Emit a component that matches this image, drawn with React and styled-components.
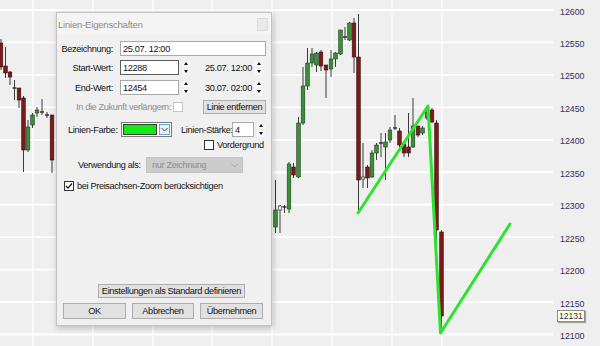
import React from 'react';
import styled, { createGlobalStyle } from 'styled-components';

const Global = createGlobalStyle`
  html, body { margin: 0; padding: 0; background: #efefef; }
  body { font-family: "Liberation Sans", Arial, sans-serif; }
`;

const Page = styled.div`
  position: relative;
  width: 600px;
  height: 346px;
  overflow: hidden;
  background: #efefef;
`;

const ChartSvg = styled.svg`
  display: block;
`;

const PriceBadge = styled.div`
  position: absolute;
  left: 557px;
  top: 310px;
  height: 10px;
  padding: 0 1px;
  background: #ffffe1;
  border: 1px solid #8c8c8c;
  box-shadow: 1px 1px 1px rgba(0, 0, 0, 0.3);
  font-family: "Liberation Sans", Arial, sans-serif;
  font-size: 8.5px;
  line-height: 10px;
  color: #2f2f5f;
`;

const Dialog = styled.div`
  position: absolute;
  left: 56px;
  top: 12px;
  width: 216px;
  height: 314px;
  box-sizing: border-box;
  background: #f0f0f0;
  border: 1px solid #c2c2c2;
  box-shadow: 1px 2px 6px rgba(0, 0, 0, 0.22);
  display: flex;
  flex-direction: column;
  font-family: "Liberation Sans", Arial, sans-serif;
  font-size: 9.2px;
  letter-spacing: -0.35px;
  color: #111;
`;

const TitleBar = styled.div`
  height: 22px;
  display: flex;
  align-items: center;
  justify-content: space-between;
  padding: 0 3px 0 1px;
  background: #f4f4f4;
  color: #8a8a8a;
  font-size: 9.5px;
  letter-spacing: -0.2px;
`;

const CloseBox = styled.div`
  width: 11px;
  height: 13px;
  box-sizing: border-box;
  background: #e9e9e9;
  border: 1px solid #dadada;
`;

const Row = styled.div`
  display: flex;
  align-items: center;
  height: ${(p) => p.$h}px;
  margin-top: ${(p) => p.$mt || 0}px;
  padding-left: ${(p) => p.$pl || 0}px;
  padding-right: ${(p) => p.$pr || 0}px;
  flex-shrink: 0;
`;

const Spacer = styled.div`
  flex: 1;
`;

const Label = styled.span`
  width: ${(p) => (p.$w ? `${p.$w}px` : 'auto')};
  margin-left: ${(p) => p.$ml || 0}px;
  text-align: ${(p) => (p.$right ? 'right' : 'left')};
  color: ${(p) => (p.$disabled ? '#8c8c8c' : '#111')};
  white-space: nowrap;
  flex-shrink: 0;
`;

const TextBox = styled.div`
  width: ${(p) => p.$w}px;
  height: 100%;
  margin-left: ${(p) => p.$ml || 0}px;
  box-sizing: border-box;
  background: #fff;
  border: 1px solid ${(p) => (p.$focus ? '#5c5c5c' : '#a9a9a9')};
  padding-left: 2px;
  display: flex;
  align-items: center;
  flex-shrink: 0;
`;

const SpinBox = styled.div`
  width: 8px;
  height: 14px;
  margin-left: ${(p) => p.$ml || 0}px;
  display: flex;
  flex-direction: column;
  justify-content: space-between;
  flex-shrink: 0;
`;

const SpinHalf = styled.div`
  height: 6px;
  background: #f7f7f7;
  display: flex;
  align-items: center;
  justify-content: center;
`;

const TriUp = styled.span`
  width: 0;
  height: 0;
  border-left: 2.5px solid transparent;
  border-right: 2.5px solid transparent;
  border-bottom: 3px solid #111;
`;

const TriDown = styled.span`
  width: 0;
  height: 0;
  border-left: 2.5px solid transparent;
  border-right: 2.5px solid transparent;
  border-top: 3px solid #111;
`;

const Button = styled.div`
  width: ${(p) => p.$w}px;
  height: 100%;
  margin-left: ${(p) => (p.$auto ? 'auto' : `${p.$ml || 0}px`)};
  box-sizing: border-box;
  background: #e1e1e1;
  border: 1px solid #adadad;
  display: flex;
  align-items: center;
  justify-content: center;
  white-space: nowrap;
  flex-shrink: 0;
`;

const Check = styled.div`
  width: 10px;
  height: 10px;
  margin-left: ${(p) => p.$ml || 0}px;
  box-sizing: border-box;
  background: #fff;
  border: 1px solid ${(p) => (p.$disabled ? '#c6c6c6' : '#333')};
  display: flex;
  align-items: center;
  justify-content: center;
  flex-shrink: 0;
`;

const ColorCombo = styled.div`
  width: ${(p) => p.$w}px;
  height: 100%;
  margin-left: ${(p) => p.$ml || 0}px;
  box-sizing: border-box;
  border: 1px solid #7a7a7a;
  background: #fff;
  display: flex;
  align-items: stretch;
  padding: 1px;
  gap: 2px;
  flex-shrink: 0;
`;

const Swatch = styled.div`
  flex: 1;
  background: #12ec12;
  border: 1px solid #3a3a3a;
`;

const DropBtn = styled.div`
  width: 11px;
  box-sizing: border-box;
  border: 1px solid #6aa6dc;
  background: #eaf3fb;
  display: flex;
  align-items: center;
  justify-content: center;
`;

const Select = styled.div`
  width: ${(p) => p.$w}px;
  height: 100%;
  margin-left: ${(p) => p.$ml || 0}px;
  box-sizing: border-box;
  background: #cccccc;
  border: 1px solid #c2c2c2;
  color: #8d8d8d;
  display: flex;
  align-items: center;
  justify-content: space-between;
  padding: 0 4px 0 5px;
  flex-shrink: 0;
`;

const Chevron = ({ color = '#555' }) => (
  <svg width="7" height="5" viewBox="0 0 7 5">
    <polyline points="0.5,1 3.5,4 6.5,1" fill="none" stroke={color} strokeWidth="1" />
  </svg>
);

const Spinner = ({ ml }) => (
  <SpinBox $ml={ml}>
    <SpinHalf>
      <TriUp />
    </SpinHalf>
    <SpinHalf>
      <TriDown />
    </SpinHalf>
  </SpinBox>
);

// [x, high, low, bodyTop, bodyBottom, type]
const candles = [
  [1, 39, 70, 43, 67, 'r'],
  [5.5, 47, 78, 66, 73, 'r'],
  [10, 71, 85, 72, 77, 'r'],
  [14.5, 80, 100, 88, 88, 'd'],
  [19, 88, 108, 88, 100, 'r'],
  [23.5, 96, 172, 98, 150, 'r'],
  [28, 120, 152, 127, 150, 'g'],
  [32.5, 113, 128, 115, 125, 'g'],
  [37, 107, 117, 110, 113, 'g'],
  [42, 99, 115, 112, 112, 'd'],
  [47, 112, 118, 115, 115, 'd'],
  [52, 115, 173, 115, 160, 'r'],
  [275.5, 180, 233, 210, 227, 'g'],
  [280, 205, 233, 206, 210, 'h'],
  [284.5, 205, 213, 207, 207, 'd'],
  [289, 162, 213, 164, 209, 'g'],
  [293.5, 163, 178, 167, 175, 'r'],
  [298.5, 117, 178, 123, 177, 'g'],
  [303, 67, 125, 86, 123, 'g'],
  [307.5, 48, 90, 63, 86, 'g'],
  [312, 48, 67, 54, 63, 'g'],
  [316.5, 52, 72, 53, 65, 'g'],
  [321, 50, 71, 52, 66, 'r'],
  [326, 65, 98, 65, 70, 'r'],
  [331, 50, 77, 59, 69, 'g'],
  [335.5, 52, 67, 53, 59, 'g'],
  [340.5, 30, 55, 30, 54, 'g'],
  [345, 27, 40, 37, 37, 'd'],
  [349.5, 22, 41, 23, 40, 'g'],
  [354, 18, 73, 23, 57, 'r'],
  [358.5, 14, 213, 57, 180, 'r'],
  [363, 143, 188, 177, 179, 'h'],
  [367.5, 165, 188, 167, 178, 'r'],
  [372, 150, 178, 153, 177, 'g'],
  [376.5, 143, 160, 145, 153, 'g'],
  [381, 133, 157, 143, 143, 'd'],
  [385.5, 133, 180, 142, 147, 'g'],
  [390, 127, 143, 130, 140, 'g'],
  [395, 115, 130, 128, 128, 'd'],
  [399.5, 128, 147, 131, 145, 'r'],
  [404, 143, 157, 144, 153, 'r'],
  [408.5, 113, 157, 147, 153, 'r'],
  [413, 98, 148, 126, 147, 'g'],
  [418, 126, 137, 126, 135, 'r'],
  [422.5, 126, 135, 128, 133, 'g'],
  [427, 107, 120, 112, 118, 'g'],
  [432, 108, 123, 110, 122, 'r'],
  [436.5, 120, 247, 123, 230, 'r'],
  [441.5, 230, 330, 232, 316, 'r'],
];

const priceLabels = [12600, 12550, 12500, 12450, 12400, 12350, 12300, 12250, 12200, 12150, 12100];
const vLines = [33, 93, 153, 212, 272, 332, 392, 442];

const Candle = ({ c }) => {
  const [x, hi, lo, top, bot, t] = c;
  const fill = t === 'g' ? '#3b8f3b' : t === 'r' ? '#7a1b1b' : '#f4f4f4';
  const stroke = t === 'g' ? '#1d3d1d' : t === 'r' ? '#3d0c0c' : '#222';
  return (
    <g>
      <line x1={x} x2={x} y1={hi} y2={lo} stroke="#3a3a3a" strokeWidth="1" />
      {t === 'd' ? (
        <line x1={x - 2} x2={x + 2} y1={top} y2={top} stroke="#111" strokeWidth="1.2" />
      ) : (
        <rect x={x - 1.8} y={top} width="3.6" height={Math.max(bot - top, 1.5)} fill={fill} stroke={stroke} strokeWidth="0.6" />
      )}
    </g>
  );
};

const Chart = () => (
  <ChartSvg width="600" height="346" viewBox="0 0 600 346">
    <rect x="0" y="0" width="600" height="346" fill="#efefef" />
    {priceLabels.map((p, i) => (
      <line key={p} x1="0" x2="553" y1={10 + i * 32.45} y2={10 + i * 32.45} stroke="#ffffff" strokeWidth="1.8" />
    ))}
    {vLines.map((x) => (
      <line key={x} x1={x} x2={x} y1="0" y2="346" stroke="#ffffff" strokeWidth="1.2" />
    ))}
    {candles.map((c) => (
      <Candle key={c[0]} c={c} />
    ))}
    <polyline
      points="358,213 428,106 440.5,333 510,224"
      fill="none"
      stroke="#2fe22f"
      strokeWidth="3"
      strokeLinecap="round"
      strokeLinejoin="round"
    />
    {priceLabels.map((p, i) => (
      <text
        key={p}
        x="560"
        y={11.5 + i * 32.45 + 3}
        fontFamily="Liberation Sans, Arial, sans-serif"
        fontSize="8.8"
        fill="#2f2f5f"
      >
        {p}
      </text>
    ))}
  </ChartSvg>
);

export default function App() {
  return (
    <>
      <Global />
      <Page>
        <Chart />
        <PriceBadge>12131</PriceBadge>
        <Dialog>
          <TitleBar>
            <span>Linien-Eigenschaften</span>
            <CloseBox />
          </TitleBar>

          <Row $h={15} $mt={6}>
            <Label $w={56} $right>Bezeichnung:</Label>
            <TextBox $w={146} $ml={7}>25.07. 12:00</TextBox>
          </Row>

          <Row $h={15} $mt={4}>
            <Label $w={56} $right>Start-Wert:</Label>
            <TextBox $w={59} $ml={7} $focus>12288</TextBox>
            <Spinner ml={3} />
            <Label $ml={15}>25.07. 12:00</Label>
            <Spinner ml={3} />
          </Row>

          <Row $h={15} $mt={5}>
            <Label $w={56} $right>End-Wert:</Label>
            <TextBox $w={59} $ml={7}>12454</TextBox>
            <Spinner ml={3} />
            <Label $ml={15}>30.07. 02:00</Label>
            <Spinner ml={3} />
          </Row>

          <Row $h={14} $mt={5} $pl={19} $pr={5}>
            <Label $disabled>In die Zukunft verlängern:</Label>
            <Check $ml={2} $disabled />
            <Button $w={63} $auto>Linie entfernen</Button>
          </Row>

          <Row $h={15} $mt={8} $pl={11}>
            <Label $w={52}>Linien-Farbe:</Label>
            <ColorCombo $w={51} $ml={1}>
              <Swatch />
              <DropBtn>
                <Chevron color="#444" />
              </DropBtn>
            </ColorCombo>
            <Label $w={49} $ml={9}>Linien-Stärke:</Label>
            <TextBox $w={22} $ml={2}>4</TextBox>
            <Spinner ml={3} />
          </Row>

          <Row $h={11} $mt={2} $pl={147}>
            <Check />
            <Label $ml={3}>Vordergrund</Label>
          </Row>

          <Row $h={16} $mt={7} $pl={21}>
            <Label $w={60}>Verwendung als:</Label>
            <Select $w={97} $ml={8}>
              <span>nur Zeichnung</span>
              <Chevron color="#a2a2a2" />
            </Select>
          </Row>

          <Row $h={11} $mt={7} $pl={7}>
            <Check>
              <svg width="8" height="8" viewBox="0 0 8 8">
                <polyline points="1,4 3,6.2 7,1.5" fill="none" stroke="#111" strokeWidth="1.2" />
              </svg>
            </Check>
            <Label $ml={3}>bei Preisachsen-Zoom berücksichtigen</Label>
          </Row>

          <Spacer />

          <Row $h={14} $pl={41}>
            <Button $w={147}>Einstellungen als Standard definieren</Button>
          </Row>

          <Row $h={16} $mt={5} $pl={6}>
            <Button $w={63}>OK</Button>
            <Button $w={62} $ml={6}>Abbrechen</Button>
            <Button $w={63} $ml={6}>Übernehmen</Button>
          </Row>
          <Row $h={6} />
        </Dialog>
      </Page>
    </>
  );
}
